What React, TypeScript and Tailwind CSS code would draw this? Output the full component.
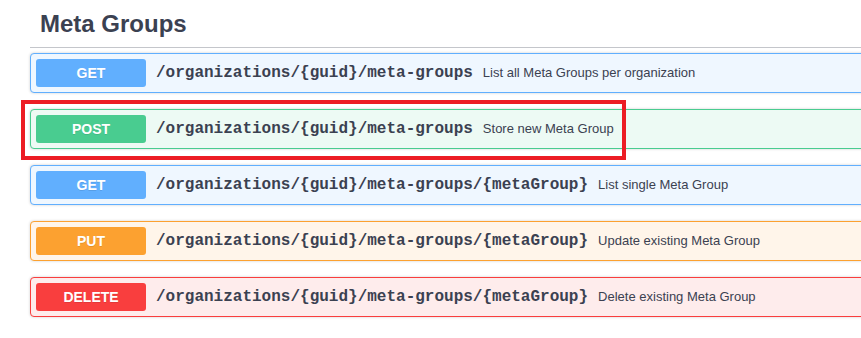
import React from "react";

type Op = {
  method: string;
  path: string;
  desc: string;
  border: string;
  bg: string;
  badge: string;
};

const ops: Op[] = [
  { method: "GET", path: "/organizations/{guid}/meta-groups", desc: "List all Meta Groups per organization", border: "border-[#61affe]", bg: "bg-[#eff7ff]", badge: "bg-[#61affe]" },
  { method: "POST", path: "/organizations/{guid}/meta-groups", desc: "Store new Meta Group", border: "border-[#49cc90]", bg: "bg-[#edfaf4]", badge: "bg-[#49cc90]" },
  { method: "GET", path: "/organizations/{guid}/meta-groups/{metaGroup}", desc: "List single Meta Group", border: "border-[#61affe]", bg: "bg-[#eff7ff]", badge: "bg-[#61affe]" },
  { method: "PUT", path: "/organizations/{guid}/meta-groups/{metaGroup}", desc: "Update existing Meta Group", border: "border-[#fca130]", bg: "bg-[#fff5ea]", badge: "bg-[#fca130]" },
  { method: "DELETE", path: "/organizations/{guid}/meta-groups/{metaGroup}", desc: "Delete existing Meta Group", border: "border-[#f93e3e]", bg: "bg-[#feecec]", badge: "bg-[#f93e3e]" },
];

export default function App() {
  return (
    <div className="relative w-[861px] h-[338px] overflow-hidden bg-white text-[#3b4151]" style={{ fontFamily: '"Liberation Sans", Arial, sans-serif' }}>
      <div className="w-[900px] pl-[30px]">
        <h4 className="m-0 mb-[5px] pt-[10px] pb-[10px] pl-[10px] text-[24px] leading-[27px] font-bold border-b border-[#c4c6cb]">
          Meta Groups
        </h4>
        <div className="flex flex-col gap-[16px]">
          {ops.map((op, i) => (
            <div
              key={i}
              className={`flex items-center h-[40px] p-[5px] border ${op.border} ${op.bg} rounded-[4px] shadow-[0_0_3px_rgba(0,0,0,0.19)]`}
            >
              <span
                className={`flex items-center justify-center w-[110px] h-[28px] rounded-[3px] ${op.badge} text-white text-[14px] font-bold [text-shadow:0_1px_0_rgba(0,0,0,0.1)]`}
              >
                {op.method}
              </span>
              <span
                className="px-[10px] text-[16px] font-bold whitespace-nowrap"
                style={{ fontFamily: '"Liberation Mono", "Courier New", monospace' }}
              >
                {op.path}
              </span>
              <span className="text-[13px] whitespace-nowrap">{op.desc}</span>
            </div>
          ))}
        </div>
      </div>
      <div className="absolute left-[21px] top-[100px] w-[605px] h-[60px] border-4 border-[#ec1c24] pointer-events-none" />
    </div>
  );
}
